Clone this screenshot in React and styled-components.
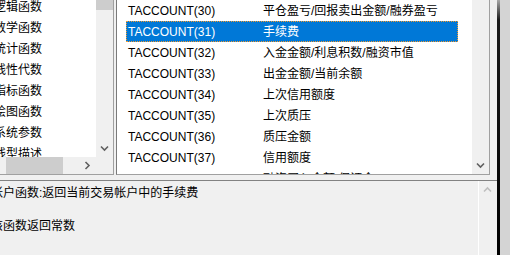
import React from 'react';
import styled, { createGlobalStyle } from 'styled-components';

const GlobalStyle = createGlobalStyle`
  html, body {
    margin: 0;
    padding: 0;
    background: #f0f0f0;
  }
  body {
    font-family: "Liberation Sans", "Noto Sans CJK SC", sans-serif;
    font-size: 12px;
    color: #000;
  }
`;

const Screen = styled.div`
  width: 510px;
  height: 255px;
  overflow: hidden;
  display: flex;
  background: #f0f0f0;
`;

// the dialog is cropped on the left by the screenshot
const Dialog = styled.div`
  flex: none;
  width: 509px;
  margin-left: -12px;
  display: flex;
  flex-direction: column;
`;

const Edge = styled.div`
  flex: 1;
  display: flex;
`;

const EdgeLine = styled.div`
  width: 3px;
  background: linear-gradient(#a8a8a8 0, #1a1a1a 20px, #000 100%);
`;

const EdgeShade = styled.div`
  flex: 1;
  background: #d4d4d4;
`;

const TopRow = styled.div`
  display: flex;
  gap: 2px;
  height: 175px;
  margin-bottom: 5px;
  padding-right: 7px;
`;

const CategoryBox = styled.div`
  width: 124px;
  border-left: 1px solid #a0a0a0;
  border-right: 1px solid #a0a0a0;
  border-bottom: 1px solid #a0a0a0;
  display: grid;
  grid-template-columns: 1fr 17px;
  grid-template-rows: 1fr 17px;
  background: #fff;
`;

const CategoryList = styled.div`
  overflow: hidden;
`;

const CategoryScroll = styled.div`
  margin-top: -3px;
`;

const CategoryItem = styled.div`
  height: 21px;
  line-height: 21px;
  padding-left: 5px;
  white-space: nowrap;
`;

const FuncBox = styled.div`
  flex: 1;
  border-left: 1px solid #7a7a7a;
  border-right: 1px solid #a0a0a0;
  border-bottom: 1px solid #a0a0a0;
  background: #fff;
  display: grid;
  grid-template-columns: 1fr 17px;
`;

const FuncList = styled.div`
  overflow: hidden;
  padding-left: 9px;
`;

const FuncRow = styled.div`
  width: 332px;
  height: 21px;
  padding-top: 1px;
  line-height: 20px;
  display: grid;
  grid-template-columns: 134px 1fr;
  white-space: nowrap;
  box-sizing: border-box;
  background: ${p => (p.$selected ? '#0078d7' : 'transparent')};
  color: ${p => (p.$selected ? '#fff' : '#000')};
  outline: ${p => (p.$selected ? '1px dotted #f39a2e' : 'none')};
  outline-offset: -1px;
`;

const FuncName = styled.span`
  padding-left: 2px;
`;

const FuncDesc = styled.span`
  padding-left: 3px;
`;

const VScroll = styled.div`
  background: #f0f0f0;
  display: flex;
  flex-direction: column;
  border-left: ${p => (p.$edge ? '1px solid #fff' : 'none')};
`;

const Thumb = styled.div`
  background: #cdcdcd;
  flex: none;
  width: ${p => (p.$w ? `${p.$w}px` : 'auto')};
  height: ${p => (p.$h ? `${p.$h}px` : 'auto')};
`;

const Track = styled.div`
  flex: 1;
`;

const HScroll = styled.div`
  background: #f0f0f0;
  display: flex;
`;

const Corner = styled.div`
  background: #f0f0f0;
`;

const ArrowButton = styled.div`
  flex: none;
  width: 17px;
  height: 17px;
  display: flex;
  align-items: center;
  justify-content: center;
  color: ${p => (p.$disabled ? '#bfbfbf' : '#606060')};
`;

const Description = styled.div`
  flex: 1;
  display: flex;
  border-top: 1px solid #828282;
`;

const DescText = styled.div`
  flex: 1;
  padding: 4px 3px 0;
  line-height: 16.5px;
  white-space: pre-line;
`;

const DescScroll = styled(VScroll)`
  width: 17px;
  margin-right: 1px;
`;

const rotations = { down: 0, up: 180, right: -90, left: 90 };

const Chevron = ({ dir }) => (
  <svg width="9" height="9" viewBox="0 0 9 9" style={{ transform: `rotate(${rotations[dir]}deg)` }}>
    <path d="M1 2.5 L4.5 6 L8 2.5" fill="none" stroke="currentColor" strokeWidth="1.6" />
  </svg>
);

const categories = ['逻辑函数', '数学函数', '统计函数', '线性代数', '指标函数', '绘图函数', '系统参数', '线型描述', '其他函数'];

const functions = [
  [30, '平仓盈亏/回报卖出金额/融券盈亏'],
  [31, '手续费'],
  [32, '入金金额/利息积数/融资市值'],
  [33, '出金金额/当前余额'],
  [34, '上次信用额度'],
  [35, '上次质压'],
  [36, '质压金额'],
  [37, '信用额度'],
  [38, '融资买入金额/保证金'],
];

export default function App() {
  return (
    <Screen>
      <GlobalStyle />
      <Dialog>
        <TopRow>
          <CategoryBox>
            <CategoryList>
              <CategoryScroll>
                {categories.map(c => (
                  <CategoryItem key={c}>{c}</CategoryItem>
                ))}
              </CategoryScroll>
            </CategoryList>
            <VScroll>
              <Thumb $h={10} />
              <Track />
              <ArrowButton><Chevron dir="down" /></ArrowButton>
            </VScroll>
            <HScroll>
              <ArrowButton><Chevron dir="left" /></ArrowButton>
              <Thumb $w={57} />
              <Track />
              <ArrowButton><Chevron dir="right" /></ArrowButton>
            </HScroll>
            <Corner />
          </CategoryBox>
          <FuncBox>
            <FuncList>
              {functions.map(([n, text]) => (
                <FuncRow key={n} $selected={n === 31}>
                  <FuncName>TACCOUNT({n})</FuncName>
                  <FuncDesc>{text}</FuncDesc>
                </FuncRow>
              ))}
            </FuncList>
            <VScroll>
              <Track />
              <ArrowButton><Chevron dir="down" /></ArrowButton>
            </VScroll>
          </FuncBox>
        </TopRow>
        <Description>
          <DescText>{'帐户函数:返回当前交易帐户中的手续费\n\n该函数返回常数'}</DescText>
          <DescScroll $edge>
            <ArrowButton $disabled><Chevron dir="up" /></ArrowButton>
            <Track />
          </DescScroll>
        </Description>
      </Dialog>
      <Edge>
        <EdgeLine />
        <EdgeShade />
      </Edge>
    </Screen>
  );
}
